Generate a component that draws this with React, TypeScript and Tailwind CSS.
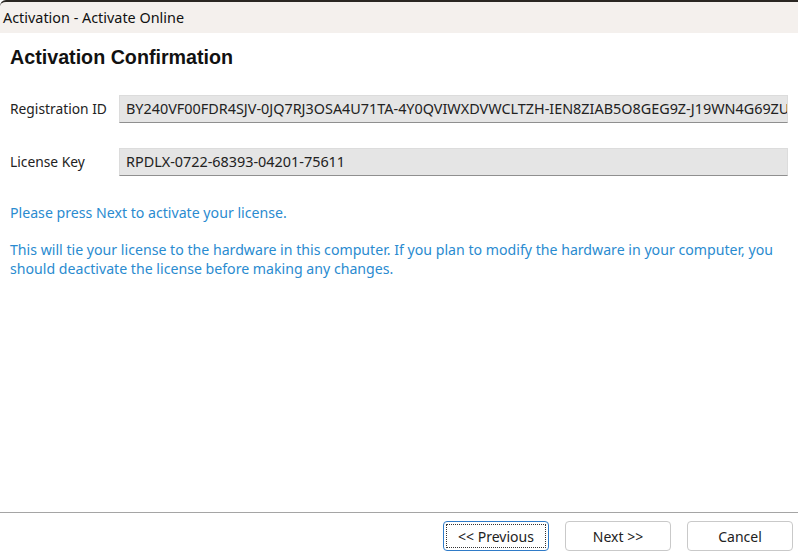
import React from "react";

const ui = { fontFamily: '"Noto Sans", "Open Sans", sans-serif' };

export default function App() {
  return (
    <div className="w-[798px] h-[556px] bg-white flex flex-col overflow-hidden relative" style={ui}>
      <div className="h-[33px] bg-[#f4f0ed] border-t-[2px] border-[#2a2622] rounded-tl-[6px] flex items-center pl-[3px] text-[14.4px] text-[#111]">
        Activation - Activate Online
      </div>
      <div className="flex-1 flex flex-col px-[10px]">
        <div className="mt-[12px] text-[19.7px] font-bold text-[#111] leading-[24px]" style={{ fontFamily: '"Liberation Sans", Arial, sans-serif' }}>
          Activation Confirmation
        </div>
        <div className="mt-[26px] flex items-center h-[28px]">
          <div className="w-[109px] text-[13.8px] text-[#222]">Registration ID</div>
          <div className="flex-1 h-[28px] bg-[#e5e5e5] border border-[#dcdcdc] border-b-[#8f8f8f] flex items-center pl-[6px] text-[14.4px] text-[#222] whitespace-nowrap overflow-hidden">
            BY240VF00FDR4SJV-0JQ7RJ3OSA4U71TA-4Y0QVIWXDVWCLTZH-IEN8ZIAB5O8GEG9Z-J19WN4G69ZUC
          </div>
        </div>
        <div className="mt-[25px] flex items-center h-[28px]">
          <div className="w-[109px] text-[13.8px] text-[#222]">License Key</div>
          <div className="flex-1 h-[28px] bg-[#e5e5e5] border border-[#dcdcdc] border-b-[#8f8f8f] flex items-center pl-[6px] text-[14.4px] text-[#222] whitespace-nowrap overflow-hidden">
            RPDLX-0722-68393-04201-75611
          </div>
        </div>
        <div className="mt-[27px] text-[14.15px] text-[#2a8bd0] leading-[19px]">
          Please press Next to activate your license.
        </div>
        <div className="mt-[18px] text-[14.15px] text-[#2a8bd0] leading-[19px] whitespace-nowrap">
          This will tie your license to the hardware in this computer. If you plan to modify the hardware in your computer, you
          <br />
          should deactivate the license before making any changes.
        </div>
      </div>
      <div className="h-[44px] border-t border-[#a5a5a5] flex items-start justify-end gap-[16px] pt-[8px] pr-[5px]">
        <button className="w-[106px] h-[30px] rounded-[4px] border border-[#2f7bc8] bg-white p-[2px] text-[14px] text-[#222]">
          <span className="flex items-center justify-center w-full h-full border border-dotted border-[#333] rounded-[1px]">
            {"<< Previous"}
          </span>
        </button>
        <button className="w-[106px] h-[30px] rounded-[4px] border border-[#c9c9c9] bg-white text-[14px] text-[#222]">
          {"Next >>"}
        </button>
        <button className="w-[106px] h-[30px] rounded-[4px] border border-[#c9c9c9] bg-white text-[14px] text-[#222]">
          Cancel
        </button>
      </div>
    </div>
  );
}
